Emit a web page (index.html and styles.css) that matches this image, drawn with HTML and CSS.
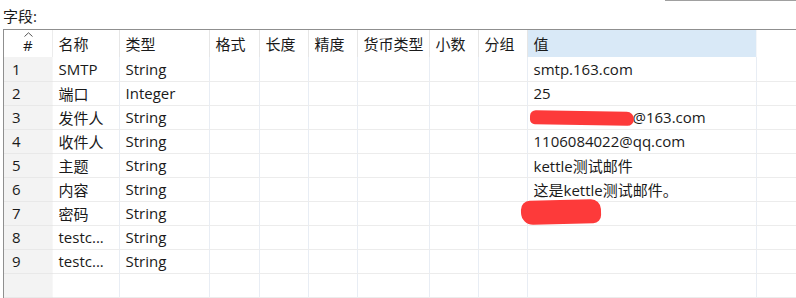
FILE: index.html
```html
<!DOCTYPE html>
<html>
<head>
<meta charset="utf-8">
<link rel="stylesheet" href="styles.css">
</head>
<body>
<div class="topbar"><div class="topline"></div></div>
<div class="label">字段:</div>
<div class="grid-wrap">
<table class="grid">
<colgroup>
<col class="c-num"><col class="c-name"><col class="c-type"><col class="c-fmt"><col class="c-len"><col class="c-prec"><col class="c-cur"><col class="c-dec"><col class="c-grp"><col class="c-val"><col class="c-rest">
</colgroup>
<thead>
<tr>
<th class="num-h"><svg class="caret" width="9" height="5" viewBox="0 0 9 5"><path d="M0.5 4.5 L4.5 0.8 L8.5 4.5" fill="none" stroke="#555" stroke-width="1"/></svg><span class="hash">#</span></th>
<th>名称</th><th>类型</th><th>格式</th><th>长度</th><th>精度</th><th>货币类型</th><th>小数</th><th>分组</th><th class="val-h">值</th><th class="rest-h"></th>
</tr>
</thead>
<tbody>
<tr><td class="num">1</td><td>SMTP</td><td>String</td><td></td><td></td><td></td><td></td><td></td><td></td><td>smtp.163.com</td><td></td></tr>
<tr><td class="num">2</td><td>端口</td><td>Integer</td><td></td><td></td><td></td><td></td><td></td><td></td><td>25</td><td></td></tr>
<tr><td class="num">3</td><td>发件人</td><td>String</td><td></td><td></td><td></td><td></td><td></td><td></td><td class="redact-cell"><span class="blob blob-a"></span><span class="after-blob">@163.com</span></td><td></td></tr>
<tr><td class="num">4</td><td>收件人</td><td>String</td><td></td><td></td><td></td><td></td><td></td><td></td><td>1106084022@qq.com</td><td></td></tr>
<tr><td class="num">5</td><td>主题</td><td>String</td><td></td><td></td><td></td><td></td><td></td><td></td><td>kettle测试邮件</td><td></td></tr>
<tr><td class="num">6</td><td>内容</td><td>String</td><td></td><td></td><td></td><td></td><td></td><td></td><td>这是kettle测试邮件。</td><td></td></tr>
<tr><td class="num">7</td><td>密码</td><td>String</td><td></td><td></td><td></td><td></td><td></td><td></td><td class="redact-cell"><span class="blob blob-b"></span></td><td></td></tr>
<tr><td class="num">8</td><td>testc...</td><td>String</td><td></td><td></td><td></td><td></td><td></td><td></td><td></td><td></td></tr>
<tr><td class="num">9</td><td>testc...</td><td>String</td><td></td><td></td><td></td><td></td><td></td><td></td><td></td><td></td></tr>
<tr><td class="num"></td><td></td><td></td><td></td><td></td><td></td><td></td><td></td><td></td><td></td><td></td></tr>
</tbody>
</table>
</div>
</body>
</html>
```
FILE: styles.css
```css
html, body {
  margin: 0;
  padding: 0;
  background: #ffffff;
  width: 796px;
  height: 298px;
  overflow: hidden;
  font-family: "Open Sans", "Noto Sans CJK SC", sans-serif;
  font-size: 15px;
  color: #1a1a1a;
}
.topbar {
  height: 1px;
  display: flex;
  justify-content: flex-end;
}
.topline {
  width: 131px;
  height: 1px;
  background: #a0a0a0;
}
.label {
  height: 28px;
  padding-left: 3px;
  font-size: 15px;
  box-sizing: border-box;
  padding-top: 3px;
  line-height: 24px;
}
.grid-wrap {
  margin-left: 3px;
  border-top: 1px solid #8f8f8f;
  border-left: 1px solid #8f8f8f;
}
.grid {
  border-collapse: collapse;
  table-layout: fixed;
  width: 793px;
}
.c-num { width: 48px; }
.c-name { width: 67px; }
.c-type { width: 90px; }
.c-fmt { width: 50px; }
.c-len { width: 49px; }
.c-prec { width: 49px; }
.c-cur { width: 72px; }
.c-dec { width: 49px; }
.c-grp { width: 49px; }
.c-val { width: 229px; }
.c-rest { width: 41px; }
.grid th {
  height: 27px;
  padding: 0 0 0 6px;
  font-weight: normal;
  text-align: left;
  border-right: 1px solid #e6e6e6;
  white-space: nowrap;
  overflow: hidden;
  vertical-align: middle;
  box-sizing: border-box;
}
.grid th.num-h {
  text-align: center;
  padding: 0;
  position: relative;
  border-right: 1px solid #ececec;
}
.hash {
  display: inline-block;
  padding-top: 3px;
}
.caret {
  position: absolute;
  left: 20px;
  top: 2px;
  display: block;
}
.grid th.val-h {
  background: #d9e9f7;
  border-right: 1px solid #f4f6f9;
}
.grid th.rest-h {
  border-right: none;
}
.grid td {
  height: 24px;
  padding: 0 0 0 6px;
  border-right: 1px solid #e8edf4;
  border-bottom: 1px solid #ececec;
  white-space: nowrap;
  overflow: hidden;
  box-sizing: border-box;
  vertical-align: middle;
}
.grid td.num {
  background: #f3f3f3;
  padding-left: 8px;
  border-right: 1px solid #f7f7f7;
  border-bottom: 1px solid #e8e8e8;
}
.grid td:last-child {
  border-right: none;
}
.grid td.redact-cell {
  position: relative;
  overflow: visible;
}
.blob {
  position: absolute;
  background: #fd3a3a;
  z-index: 2;
}
.blob-a {
  left: 2px;
  top: 5px;
  width: 104px;
  height: 14px;
  border-radius: 7px 9px 8px 6px;
  transform: rotate(1deg);
}
.after-blob {
  padding-left: 99px;
}
.blob-b {
  left: -7px;
  top: -2px;
  width: 80px;
  height: 24px;
  border-radius: 9px 10px 8px 12px;
  transform: rotate(-1.5deg);
}
```
